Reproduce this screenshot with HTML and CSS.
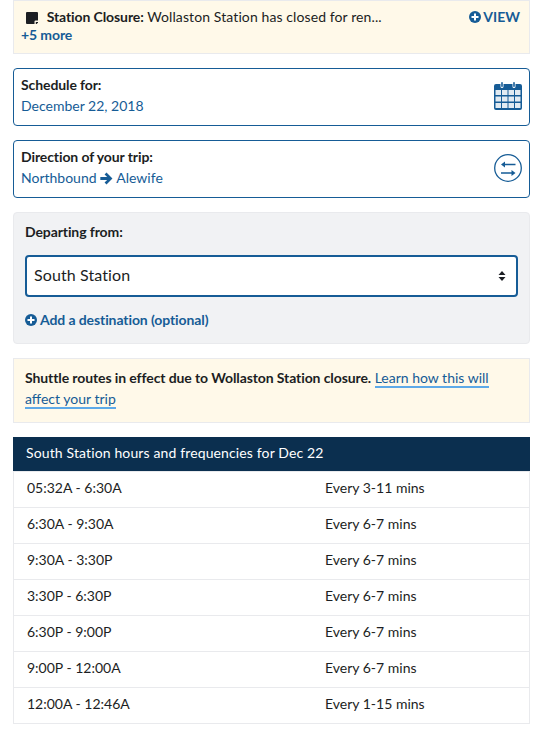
FILE: index.html
```html
<!DOCTYPE html>
<html lang="en">
<head>
<meta charset="utf-8">
<title>Schedule</title>
<link rel="stylesheet" href="styles.css">
</head>
<body>
<main class="page">
  <section class="alert">
    <div class="alert-main">
      <div class="alert-text">
        <svg class="alert-icon" viewBox="0 0 12 12"><path d="M0 1a1 1 0 0 1 1-1h10a1 1 0 0 1 1 1v7.500h-2.500a1 1 0 0 0-1 1V12H1a1 1 0 0 1-1-1z"/><path d="M9.800 10h2.200v.6l-1.400 1.400h-.8z"/></svg>
        <strong>Station Closure:</strong> Wollaston Station has closed for ren...
      </div>
      <a class="alert-view" href="#"><svg class="plus plus-tight" viewBox="0 0 12 12"><circle cx="6" cy="6" r="6"/><path class="plus-mark" d="M5 2.500h2V5h2.500v2H7v2.500H5V7H2.500V5H5z"/></svg>VIEW</a>
    </div>
    <a class="more" href="#">+5 more</a>
  </section>

  <section class="card">
    <div>
      <div class="card-label">Schedule for:</div>
      <a class="card-value" href="#">December 22, 2018</a>
    </div>
    <svg class="card-icon" viewBox="0 0 28 28">
      <path class="fill" d="M2 2h4.500v2.500a1.500 1.500 0 0 0 3 0V2h9v2.500a1.500 1.500 0 0 0 3 0V2H26a2 2 0 0 1 2 2v22a2 2 0 0 1-2 2H2a2 2 0 0 1-2-2V4a2 2 0 0 1 2-2z"/>
      <rect class="fill" x="7.200" y="0" width="1.600" height="5" rx=".8"/>
      <rect class="fill" x="19.200" y="0" width="1.600" height="5" rx=".8"/>
      <g class="cells"><rect x="1.500" y="8" width="5.500" height="5"/><rect x="8" y="8" width="5.500" height="5"/><rect x="14.500" y="8" width="5.500" height="5"/><rect x="21" y="8" width="5.500" height="5"/><rect x="1.500" y="14.500" width="5.500" height="5"/><rect x="8" y="14.500" width="5.500" height="5"/><rect x="14.500" y="14.500" width="5.500" height="5"/><rect x="21" y="14.500" width="5.500" height="5"/><rect x="1.500" y="21" width="5.500" height="5"/><rect x="8" y="21" width="5.500" height="5"/><rect x="14.500" y="21" width="5.500" height="5"/><rect x="21" y="21" width="5.500" height="5"/></g>
    </svg>
  </section>

  <section class="card">
    <div>
      <div class="card-label">Direction of your trip:</div>
      <a class="card-value" href="#">Northbound <svg class="arrow" viewBox="0 0 12 12"><path d="M6 .5l5.500 5.500L6 11.500 4.200 9.700 6.600 7.400H.3V4.600h6.300L4.200 2.300z"/></svg> Alewife</a>
    </div>
    <svg class="card-icon" viewBox="0 0 28 28">
      <circle class="ring" cx="14" cy="14" r="13.300"/>
      <path class="fill" d="M11 7.500v2.300h10.500v1.500H11v2.200L7 10.500zM17.500 16v2.300H7v1.500h10.500V22l4-3z"/>
    </svg>
  </section>

  <section class="panel">
    <label class="panel-label" for="origin">Departing from:</label>
    <div class="select-wrap">
      <select id="origin" class="select"><option>South Station</option></select>
      <svg class="carets" viewBox="0 0 8 10"><path d="M4 0L7.500 4H.5zM4 10L.5 6h7z"/></svg>
    </div>
    <a class="add-dest" href="#"><svg class="plus" viewBox="0 0 12 12"><circle cx="6" cy="6" r="6"/><path class="plus-mark" d="M5 2.500h2V5h2.500v2H7v2.500H5V7H2.500V5H5z"/></svg>Add a destination (optional)</a>
  </section>

  <section class="notice">
    <strong>Shuttle routes in effect due to Wollaston Station closure.</strong> <a href="#">Learn how this will affect your trip</a>
  </section>

  <section class="hours">
    <h2 class="hours-head">South Station hours and frequencies for Dec 22</h2>
    <div class="hours-row"><span>05:32A - 6:30A</span><span>Every 3-11 mins</span></div>
    <div class="hours-row"><span>6:30A - 9:30A</span><span>Every 6-7 mins</span></div>
    <div class="hours-row"><span>9:30A - 3:30P</span><span>Every 6-7 mins</span></div>
    <div class="hours-row"><span>3:30P - 6:30P</span><span>Every 6-7 mins</span></div>
    <div class="hours-row"><span>6:30P - 9:00P</span><span>Every 6-7 mins</span></div>
    <div class="hours-row"><span>9:00P - 12:00A</span><span>Every 6-7 mins</span></div>
    <div class="hours-row"><span>12:00A - 12:46A</span><span>Every 1-15 mins</span></div>
  </section>
</main>
</body>
</html>
```
FILE: styles.css
```css
* { box-sizing: border-box; }
html, body { margin: 0; padding: 0; background: #fff; }
body {
  font-family: Lato, sans-serif;
  font-size: 14px;
  line-height: 22px;
  color: #1c1e23;
}
a { color: #165c96; text-decoration: none; }
strong { font-weight: 700; letter-spacing: -.1px; }
.page { padding: 0 13px; display: flex; flex-direction: column; height: 737px; overflow: hidden; }

.alert {
  height: 54px;
  padding: 5px 9px 0 7px;
  background: #fff9e9;
  border: 1px solid #e9eaed;
  margin-bottom: 14px;
}
.alert-main { display: flex; justify-content: space-between; align-items: center; }
.alert-text { padding-left: 5px; letter-spacing: .1px; }
.alert-icon { width: 12px; height: 12px; margin-right: 5px; vertical-align: -2px; fill: #1c1e23; }
.alert-view { display: flex; align-items: center; font-weight: 700; font-size: 14px; }
.plus { width: 12px; height: 12px; flex: none; fill: #165c96; margin-right: 3px; }
.plus-tight { margin-right: 2px; }
.plus-mark { fill: #fff; }
.more { font-weight: 700; display: block; margin-top: -4px; letter-spacing: -.1px; }

.card {
  height: 58px;
  margin-bottom: 14px;
  padding: 5px 7px 0;
  border: 1px solid #165c96;
  border-radius: 4px;
  display: flex;
  justify-content: space-between;
}
.card-label { font-weight: 700; letter-spacing: -.1px; }
.card-value { display: block; margin-top: -1px; }
.arrow { width: 13px; height: 13px; margin: 0; fill: #165c96; vertical-align: -2px; }
.card-icon { width: 28px; height: 28px; margin-top: 8px; flex: none; }
.fill { fill: #165c96; }
.cells rect { fill: #fff; opacity: .88; }
.ring { fill: none; stroke: #165c96; stroke-width: 1.300; }

.panel {
  height: 132px;
  margin-bottom: 14px;
  padding: 8px 11px 0;
  background: #f1f2f4;
  border: 1px solid #e9eaed;
  border-radius: 4px;
}
.panel-label { display: block; font-weight: 700; letter-spacing: -.1px; }
.select-wrap { position: relative; margin-top: 12px; }
.select {
  display: block;
  width: 100%;
  height: 42px;
  padding: 0 7px 2px;
  appearance: none;
  font: 16px/22px Lato, sans-serif;
  letter-spacing: .1px;
  color: #1c1e23;
  background: #fff;
  border: 2px solid #165c96;
  border-radius: 4px;
}
.carets { position: absolute; right: 12px; top: 16px; width: 8px; height: 10px; fill: #1c1e23; }
.add-dest { display: flex; align-items: center; margin-top: 12px; font-weight: 700; letter-spacing: -.1px; }

.notice {
  height: 65px;
  margin-bottom: 14px;
  padding: 8px 11px 0;
  background: #fff9e9;
  border: 1px solid #e9eaed;
  line-height: 21px;
}
.notice a { border-bottom: 2px solid #5da9e8; }

.hours-head {
  margin: 0;
  height: 34px;
  padding: 0 13px;
  background: #0b2f4f;
  color: #fff;
  font-size: 14px;
  font-weight: 400;
  line-height: 32px;
  letter-spacing: .13px;
}
.hours-row {
  display: grid;
  grid-template-columns: 298px 1fr;
  height: 36px;
  padding: 0 13px 3px;
  align-items: center;
  border: 1px solid #e9eaed;
  border-top: 0;
}
.hours-row:first-of-type { height: 37px; border-top: 1px solid #e9eaed; }
```
